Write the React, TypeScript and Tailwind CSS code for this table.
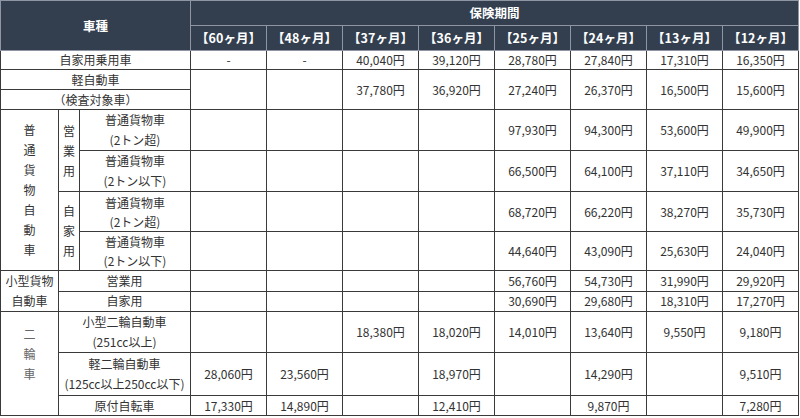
import React from 'react';

const months = ['60', '48', '37', '36', '25', '24', '13', '12'];

const td = 'border border-[#3a3a3a] p-0 text-center align-middle';
const th = 'border border-[#8e96a3] p-0 text-center align-middle font-bold text-white';

function Values({ vals }: { vals: string[] }) {
  return (
    <>
      {vals.map((v, i) => (
        <td key={i} className={td}>
          {v}
        </td>
      ))}
    </>
  );
}

const E = ['', '', '', ''];

function Vert({ text }: { text: string }) {
  return (
    <div className="flex flex-col items-center leading-[20px]">
      {text.split('').map((c, i) => (
        <span key={i}>{c}</span>
      ))}
    </div>
  );
}

export default function App() {
  return (
    <div className="w-[800px] h-[418px] bg-white">
      <table
        className="table-fixed border-collapse w-[799px] border-l-[#9a9a9a] text-[12px] leading-[18px] text-[#333]"
        style={{ fontFamily: '"Noto Sans CJK JP", "Noto Sans", sans-serif' }}
      >
        <colgroup>
          <col className="w-[58px]" />
          <col className="w-[21px]" />
          <col className="w-[111px]" />
          {months.map((m) => (
            <col key={m} className="w-[76px]" />
          ))}
        </colgroup>
        <thead className="bg-[#333f4f]">
          <tr className="h-[25px]">
            <th colSpan={3} rowSpan={2} className={`${th} text-[12.5px]`}>
              車種
            </th>
            <th colSpan={8} className={`${th} text-[12.5px]`}>
              保険期間
            </th>
          </tr>
          <tr className="h-[25px]">
            {months.map((m) => (
              <th key={m} className={`${th} text-[12.5px]`}>
                【{m}ヶ月】
              </th>
            ))}
          </tr>
        </thead>
        <tbody>
          <tr className="h-[18px]">
            <td colSpan={3} className={td}>自家用乗用車</td>
            <Values vals={['-', '-', '40,040円', '39,120円', '28,780円', '27,840円', '17,310円', '16,350円']} />
          </tr>
          <tr className="h-[20px]">
            <td colSpan={3} className={td}>軽自動車</td>
            {['', '', '37,780円', '36,920円', '27,240円', '26,370円', '16,500円', '15,600円'].map((v, i) => (
              <td key={i} rowSpan={2} className={td}>
                {v}
              </td>
            ))}
          </tr>
          <tr className="h-[20px]">
            <td colSpan={3} className={td}>（検査対象車）</td>
          </tr>
          <tr className="h-[40px]">
            <td rowSpan={4} className={td}>
              <Vert text="普通貨物自動車" />
            </td>
            <td rowSpan={2} className={td}>
              <Vert text="営業用" />
            </td>
            <td className={`${td} leading-[20px]`}>
              普通貨物車
              <br />
              (2トン超)
            </td>
            <Values vals={[...E, '97,930円', '94,300円', '53,600円', '49,900円']} />
          </tr>
          <tr className="h-[40px]">
            <td className={`${td} leading-[20px]`}>
              普通貨物車
              <br />
              (2トン以下)
            </td>
            <Values vals={[...E, '66,500円', '64,100円', '37,110円', '34,650円']} />
          </tr>
          <tr className="h-[40px]">
            <td rowSpan={2} className={td}>
              <Vert text="自家用" />
            </td>
            <td className={`${td} leading-[19px]`}>
              普通貨物車
              <br />
              (2トン超)
            </td>
            <Values vals={[...E, '68,720円', '66,220円', '38,270円', '35,730円']} />
          </tr>
          <tr className="h-[39px]">
            <td className={`${td} leading-[19px]`}>
              普通貨物車
              <br />
              (2トン以下)
            </td>
            <Values vals={[...E, '44,640円', '43,090円', '25,630円', '24,040円']} />
          </tr>
          <tr className="h-[20px]">
            <td rowSpan={2} className={`${td} leading-[20px]`}>
              小型貨物
              <br />
              自動車
            </td>
            <td colSpan={2} className={td}>営業用</td>
            <Values vals={[...E, '56,760円', '54,730円', '31,990円', '29,920円']} />
          </tr>
          <tr className="h-[20px]">
            <td colSpan={2} className={td}>自家用</td>
            <Values vals={[...E, '30,690円', '29,680円', '18,310円', '17,270円']} />
          </tr>
          <tr className="h-[41px]">
            <td rowSpan={3} className={`${td} text-[#666]`}>
              <div className="pb-[20px]">
                <Vert text="二輪車" />
              </div>
            </td>
            <td colSpan={2} className={`${td} leading-[20px]`}>
              小型二輪自動車
              <br />
              (251cc以上)
            </td>
            <Values vals={['', '', '18,380円', '18,020円', '14,010円', '13,640円', '9,550円', '9,180円']} />
          </tr>
          <tr className="h-[43px]">
            <td colSpan={2} className={`${td} leading-[20px]`}>
              軽二輪自動車
              <br />
              (125cc以上250cc以下)
            </td>
            <Values vals={['28,060円', '23,560円', '', '18,970円', '', '14,290円', '', '9,510円']} />
          </tr>
          <tr className="h-[20px]">
            <td colSpan={2} className={td}>原付自転車</td>
            <Values vals={['17,330円', '14,890円', '', '12,410円', '', '9,870円', '', '7,280円']} />
          </tr>
        </tbody>
      </table>
    </div>
  );
}
